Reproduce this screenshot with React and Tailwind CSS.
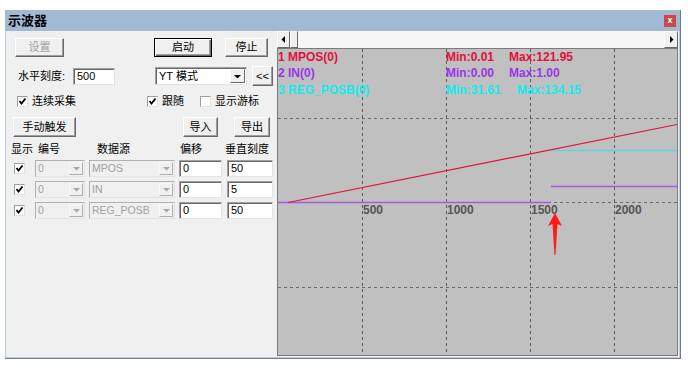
import React from "react";

const Btn = ({ children, className = "", disabled, def }) => (
  <div
    className={`flex items-center justify-center bg-[#f0f0f0] border ${
      def
        ? "border-black shadow-[inset_1px_1px_0_#ffffff,inset_-1px_-1px_0_#696969,inset_-2px_-2px_0_#a0a0a0]"
        : "border-t-white border-l-white border-r-[#696969] border-b-[#696969] shadow-[inset_-1px_-1px_0_#a0a0a0]"
    } ${disabled ? "text-[#a0a0a0]" : "text-black"} ${className}`}
  >
    {children}
  </div>
);

const Field = ({ children, className = "" }) => (
  <div
    className={`flex items-center bg-white border border-t-[#a0a0a0] border-l-[#a0a0a0] border-r-[#e3e3e3] border-b-[#e3e3e3] shadow-[inset_1px_1px_0_#696969] pl-[3px] text-black ${className}`}
  >
    {children}
  </div>
);

const Tri = ({ fill = "#000", dir = "down" }) => (
  <svg width="7" height="7" viewBox="0 0 7 7">
    {dir === "down" && <polygon points="0,2 7,2 3.5,5.5" fill={fill} />}
    {dir === "left" && <polygon points="5,0 5,7 1.5,3.5" fill={fill} />}
    {dir === "right" && <polygon points="2,0 2,7 5.5,3.5" fill={fill} />}
  </svg>
);

const Check = ({ checked }) => (
  <div className="w-[11px] h-[11px] bg-white border border-t-[#a0a0a0] border-l-[#a0a0a0] border-r-[#e3e3e3] border-b-[#e3e3e3] flex items-center justify-center">
    {checked && (
      <svg width="9" height="9" viewBox="0 0 9 9">
        <polyline points="1.5,4 3.5,6.5 7.5,1.5" fill="none" stroke="#000" strokeWidth="1.8" />
      </svg>
    )}
  </div>
);

const DisCombo = ({ text, className = "" }) => (
  <div
    className={`flex items-stretch bg-[#f0f0f0] border border-t-[#b0b0b0] border-l-[#b0b0b0] border-r-[#e3e3e3] border-b-[#e3e3e3] text-[#a0a0a0] ${className}`}
  >
    <div className="flex-1 flex items-center pl-[2px] overflow-hidden whitespace-nowrap text-[10.5px]">{text}</div>
    <div className="w-[14px] m-[1px] flex items-center justify-center bg-[#f0f0f0] border border-t-[#f8f8f8] border-l-[#f8f8f8] border-r-[#b0b0b0] border-b-[#b0b0b0]">
      <Tri fill="#a8a8a8" />
    </div>
  </div>
);

const rows = [
  { src: "MPOS", off: "0", scale: "50" },
  { src: "IN", off: "0", scale: "5" },
  { src: "REG_POSB", off: "0", scale: "50" },
];

const Plot = () => {
  const vx = [84, 168, 252, 336];
  const hy = [69, 153, 238];
  const lab = ["500", "1000", "1500", "2000"];
  return (
    <svg width="399" height="306" className="block">
      {vx.map((x) => (
        <line key={x} x1={x + 0.5} y1="0" x2={x + 0.5} y2="306" stroke="#5a5a5a" strokeDasharray="3 3" />
      ))}
      {hy.map((y) => (
        <line key={y} x1="0" y1={y + 0.5} x2="399" y2={y + 0.5} stroke="#6a6a6a" strokeDasharray="3 3" />
      ))}
      <g fontFamily="Liberation Sans, Arial, sans-serif" fontWeight="bold" fontSize="12">
        {lab.map((t, i) => (
          <text key={t} x={vx[i] + 1} y="165" fill="#555555">{t}</text>
        ))}
        <text x="0" y="12" fill="#e2103c">1 MPOS(0)</text>
        <text x="168" y="12" fill="#e2103c">Min:0.01</text>
        <text x="231" y="12" fill="#e2103c">Max:121.95</text>
        <text x="0" y="28" fill="#9b35e6">2 IN(0)</text>
        <text x="168" y="28" fill="#9b35e6">Min:0.00</text>
        <text x="231" y="28" fill="#9b35e6">Max:1.00</text>
        <text x="0" y="45" fill="#10ecf0">3 REG_POSB(0)</text>
        <text x="168" y="45" fill="#10ecf0">Min:31.61</text>
        <text x="239" y="45" fill="#10ecf0">Max:134.15</text>
      </g>
      <line x1="0" y1="153.5" x2="273" y2="153.5" stroke="#a45be0" strokeWidth="1.3" />
      <line x1="273" y1="137.5" x2="399" y2="137.5" stroke="#a45be0" strokeWidth="1.3" />
      <line x1="273" y1="101.5" x2="399" y2="101.5" stroke="#5ad8e0" strokeWidth="1.3" />
      <line x1="10" y1="153.5" x2="399" y2="75.5" stroke="#e0103c" strokeWidth="1.2" />
      <polygon points="277,164 284,177 279.5,175 277.5,206 276.5,206 274.5,175 270,177" fill="#ff1a1a" />
    </svg>
  );
};

export default function App() {
  return (
    <div className="w-[688px] h-[371px] bg-white pt-[10px] pl-[5px] font-['Liberation_Sans','Noto_Sans_CJK_SC',sans-serif] text-[11px] overflow-hidden">
      <div className="w-[676px] h-[349px] flex flex-col border-r border-b border-[#7a7a7a]">
        {/* title bar */}
        <div className="h-[21px] bg-[#a2b9d4] flex items-center justify-between pl-[3px] pr-[4px]">
          <span className="text-[13px] font-bold text-black">示波器</span>
          <div className="w-[12px] h-[12px] bg-[#c94848] flex items-center justify-center text-white text-[9px] font-bold leading-none">
            x
          </div>
        </div>
        <div className="flex-1 flex border-l border-r border-b border-[#b9cde3]">
          {/* left panel */}
          <div className="w-[271px] bg-[#f0f0f0] flex flex-col">
            <div className="mt-[7px] flex h-[19px]">
              <Btn disabled className="ml-[9px] w-[49px]">设置</Btn>
              <Btn def className="ml-[90px] w-[58px]">启动</Btn>
              <Btn className="ml-[13px] w-[43px]">停止</Btn>
            </div>
            <div className="mt-[9px] flex items-center h-[20px]">
              <span className="ml-[12px] w-[55px]">水平刻度:</span>
              <Field className="w-[42px] h-[17px]">500</Field>
              <div className="ml-[40px] w-[92px] h-[18px] flex items-stretch bg-white border border-t-[#a0a0a0] border-l-[#a0a0a0] border-r-[#e3e3e3] border-b-[#e3e3e3] shadow-[inset_1px_1px_0_#696969]">
                <div className="flex-1 flex items-center pl-[3px]">YT 模式</div>
                <div className="w-[15px] m-[1px] flex items-center justify-center bg-[#f0f0f0] border border-t-white border-l-white border-r-[#696969] border-b-[#696969]">
                  <Tri />
                </div>
              </div>
              <Btn className="ml-[5px] w-[21px] h-[20px]">&lt;&lt;</Btn>
            </div>
            <div className="mt-[7px] flex items-center h-[16px]">
              <div className="ml-[11px] w-[130px] flex items-center gap-[4px]">
                <Check checked />
                <span>连续采集</span>
              </div>
              <div className="w-[53px] flex items-center gap-[4px]">
                <Check checked />
                <span>跟随</span>
              </div>
              <div className="flex items-center gap-[4px]">
                <Check />
                <span>显示游标</span>
              </div>
            </div>
            <div className="mt-[8px] flex h-[20px]">
              <Btn className="ml-[7px] w-[63px]">手动触发</Btn>
              <Btn className="ml-[107px] w-[35px]">导入</Btn>
              <Btn className="ml-[16px] w-[36px]">导出</Btn>
            </div>
            <div className="mt-[5px] flex items-center h-[14px]">
              <span className="ml-[5px] w-[27px]">显示</span>
              <span className="w-[59px]">编号</span>
              <span className="w-[83px]">数据源</span>
              <span className="w-[45px]">偏移</span>
              <span>垂直刻度</span>
            </div>
            <div className="mt-[4px] flex flex-col gap-[4px]">
              {rows.map((r) => (
                <div key={r.src} className="flex items-center h-[17px]">
                  <div className="ml-[8px]">
                    <Check checked />
                  </div>
                  <DisCombo text="0" className="ml-[10px] w-[50px] h-[17px]" />
                  <DisCombo text={r.src} className="ml-[4px] w-[86px] h-[17px]" />
                  <Field className="ml-[4px] w-[43px] h-[17px]">{r.off}</Field>
                  <Field className="ml-[5px] w-[46px] h-[17px]">{r.scale}</Field>
                </div>
              ))}
            </div>
          </div>
          {/* right panel */}
          <div className="flex-1 flex flex-col pr-[1px] pb-[1px] bg-[#f0f0f0]">
            <div className="h-[17px] flex bg-[#f6f6f6]">
              <div className="w-[13px] flex items-center justify-center bg-[#f0f0f0] border border-t-white border-l-white border-r-[#696969] border-b-[#696969]">
                <Tri dir="left" />
              </div>
              <div className="w-[8px] bg-[#f0f0f0] border border-t-white border-l-white border-r-[#696969] border-b-[#696969]" />
              <div className="flex-1" />
              <div className="w-[14px] flex items-center justify-center bg-[#f0f0f0] border border-t-white border-l-white border-r-[#696969] border-b-[#696969]">
                <Tri dir="right" />
              </div>
            </div>
            <div className="flex-1 border border-[#7a7a7a] bg-[#c0c0c0] overflow-hidden">
              <Plot />
            </div>
          </div>
        </div>
      </div>
    </div>
  );
}
